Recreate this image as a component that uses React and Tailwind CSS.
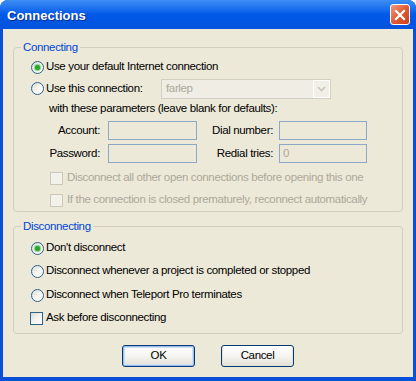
import React from 'react';

function Radio({ checked }) {
  return (
    <span className="w-[13px] h-[13px] shrink-0 rounded-full border border-[#2c628b] bg-gradient-to-br from-[#dcdcd5] via-[#f4f4f0] to-white flex items-center justify-center">
      {checked && <span className="w-[5px] h-[5px] rounded-full bg-[#2aa62a] shadow-[0_0_1px_1px_#7fd07f]" />}
    </span>
  );
}

function Checkbox({ disabled }) {
  return (
    <span
      className={`w-[13px] h-[13px] shrink-0 border ${
        disabled
          ? 'border-[#cac8bb] bg-[#f3f2ea]'
          : 'border-[#2c628b] bg-gradient-to-br from-[#dcdcd5] via-[#f4f4f0] to-white'
      }`}
    />
  );
}

function Field({ value }) {
  return (
    <div className="h-[19px] border border-[#8ea9c8] bg-[#ece9d8] pl-[3px] text-[#aca899] leading-[17px]">
      {value}
    </div>
  );
}

function XpButton({ label, primary }) {
  return (
    <button
      className={`w-[73px] h-[22px] rounded-[3px] border border-[#003c74] bg-gradient-to-b from-white via-[#f5f4ef] to-[#e3e1d8] text-black ${
        primary ? 'shadow-[inset_0_0_0_1px_#9cbbf0,inset_0_0_0_2px_#cee0f9]' : 'shadow-[inset_0_-1px_0_1px_#e5e2d8]'
      }`}
    >
      {label}
    </button>
  );
}

export default function App() {
  return (
    <div className="w-[416px] h-[381px] flex flex-col rounded-t-[8px] bg-[#0850d8] font-['Liberation_Sans',Arial,sans-serif] text-[11.5px] tracking-[-0.35px] text-black">
      {/* Title bar */}
      <div className="h-[29px] shrink-0 flex items-center justify-between pl-[7px] pr-[6px] rounded-t-[8px] bg-gradient-to-b from-[#3d8ef5] via-[#0058e8] to-[#0553dc]">
        <span className="pt-[2px] text-white font-bold text-[13px] tracking-[0px] [text-shadow:1px_1px_0_#0a2d8c]">
          Connections
        </span>
        <button className="w-[20px] h-[21px] rounded-[3px] border border-white bg-gradient-to-br from-[#f09a7c] via-[#e05a33] to-[#c8401c] flex items-center justify-center">
          <svg width="12" height="12" viewBox="0 0 12 12">
            <path d="M2 2 L10 10 M10 2 L2 10" stroke="white" strokeWidth="2.2" strokeLinecap="square" />
          </svg>
        </button>
      </div>

      {/* Body */}
      <div className="flex-1 mx-[3px] mb-[4px] bg-[#ece9d8] px-[10px] pt-[11px] flex flex-col">
        <fieldset className="border border-[#d0d0bf] rounded-[4px] pt-[2px]">
          <legend className="ml-[7px] px-[2px] leading-[14px] text-[#0046d5]">Connecting</legend>

          <div className="h-[22px] flex items-center pl-[17px] gap-[2px]">
            <Radio checked />
            <span>Use your default Internet connection</span>
          </div>

          <div className="h-[21px] flex items-center pl-[17px]">
            <Radio />
            <span className="ml-[2px] w-[115px]">Use this connection:</span>
            <div className="w-[170px] h-[20px] border border-[#d3d0c3] bg-[#efede4] flex items-center">
              <span className="flex-1 pl-[4px] text-[#aca899]">farlep</span>
              <span className="w-[17px] h-[18px] border border-white bg-[#f1efe6] flex items-center justify-center">
                <svg width="9" height="6" viewBox="0 0 9 6">
                  <path d="M1 1 L4.5 4.5 L8 1" stroke="#c9c7ba" strokeWidth="1.6" fill="none" />
                </svg>
              </span>
            </div>
          </div>

          <div className="h-[20px] flex items-center pl-[35px]">
            with these parameters (leave blank for defaults):
          </div>

          <div className="h-[23px] flex items-center">
            <span className="w-[86px] text-right">Account:</span>
            <div className="w-[89px] ml-[8px]">
              <Field value="" />
            </div>
            <span className="w-[76px] text-right">Dial number:</span>
            <div className="w-[88px] ml-[6px]">
              <Field value="" />
            </div>
          </div>

          <div className="h-[23px] flex items-center">
            <span className="w-[86px] text-right">Password:</span>
            <div className="w-[89px] ml-[8px]">
              <Field value="" />
            </div>
            <span className="w-[76px] text-right">Redial tries:</span>
            <div className="w-[88px] ml-[6px]">
              <Field value="0" />
            </div>
          </div>

          <div className="h-[22px] mt-[2px] flex items-center pl-[36px] gap-[4px] text-[#aca899]">
            <Checkbox disabled />
            <span>Disconnect all other open connections before opening this one</span>
          </div>

          <div className="h-[22px] flex items-center pl-[36px] gap-[4px] text-[#aca899]">
            <Checkbox disabled />
            <span>If the connection is closed prematurely, reconnect automatically</span>
          </div>
        </fieldset>

        <fieldset className="mt-[7px] border border-[#d0d0bf] rounded-[4px] pt-[4px] pb-[4px]">
          <legend className="ml-[7px] px-[2px] leading-[14px] text-[#0046d5]">Disconnecting</legend>

          <div className="h-[22px] flex items-center pl-[17px] gap-[2px]">
            <Radio checked />
            <span>Don't disconnect</span>
          </div>
          <div className="h-[24px] flex items-center pl-[17px] gap-[2px]">
            <Radio />
            <span>Disconnect whenever a project is completed or stopped</span>
          </div>
          <div className="h-[24px] flex items-center pl-[17px] gap-[2px]">
            <Radio />
            <span>Disconnect when Teleport Pro terminates</span>
          </div>
          <div className="h-[22px] flex items-center pl-[16px] gap-[3px]">
            <Checkbox />
            <span>Ask before disconnecting</span>
          </div>
        </fieldset>

        <div className="mt-[11px] flex justify-center gap-[26px]">
          <XpButton label="OK" primary />
          <XpButton label="Cancel" />
        </div>
      </div>
    </div>
  );
}
